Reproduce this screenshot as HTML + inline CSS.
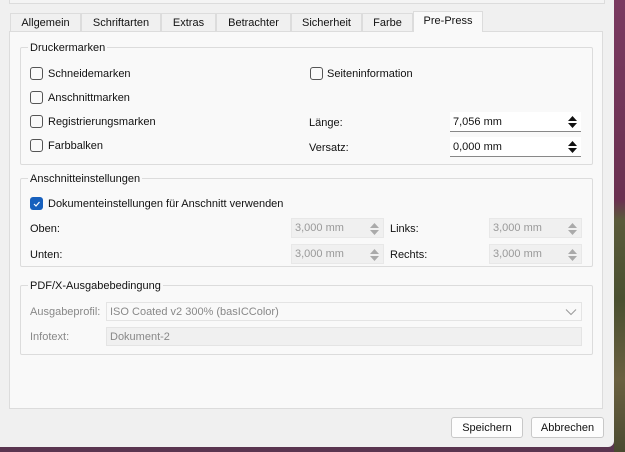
<!DOCTYPE html>
<html><head><meta charset="utf-8"><style>
*{box-sizing:border-box;margin:0;padding:0}
body{width:625px;height:452px;overflow:hidden;background:#5a3550;font-family:"Liberation Sans",sans-serif;font-size:11px;color:#111;position:relative}
.abs{position:absolute}
.win{left:0;top:0;width:614px;height:447px;background:#f0f0f0;border-bottom-right-radius:6px}
.photo{left:614px;top:0;width:11px;height:452px;background:linear-gradient(#7a3a60 0,#6a3050 200px,#5a5a3a 220px,#4a5030 300px,#6a6040 380px,#4a4a30 452px)}
.tab{top:13px;height:19px;border:1px solid #dcdcdc;border-bottom:none;background:#f0f0f0;text-align:center;line-height:19px}
.tab.sel{top:11px;height:21px;background:#f9f9f9;z-index:2;line-height:19px}
.page{left:9px;top:31px;width:594px;height:378px;background:#f9f9f9;border:1px solid #dcdcdc}
.grp{border:1px solid #dcdcdc;border-radius:2px}
.gt{background:#f9f9f9;padding:0 2px;line-height:13px}
.cb{width:13px;height:13px;border:1px solid #555;border-radius:3px;background:#f9f9f9}
.t{margin-top:2px}
.spin{height:20px;background:#fff;border-bottom:1px solid #888;padding-left:3px;line-height:21px}
.spin.dis{background:#f0f0f0;border:1px solid #e8e8e8;color:#999;line-height:19px}
.arr{position:absolute;right:3px;top:3px;width:11px;height:14px}
.gray{color:#888}
.btn{top:417px;height:21px;border:1px solid #c8c8c8;border-radius:3px;background:#fdfdfd;text-align:center;line-height:20px}
</style></head><body>
<div class="abs win"></div>
<div class="abs photo"></div>
<div class="abs" style="left:9px;top:0;width:596px;height:4px;border:1px solid #dcdcdc;border-top:none;background:#f4f4f4"></div>

<div class="abs tab" style="left:10px;width:71px">Allgemein</div>
<div class="abs tab" style="left:81px;width:80px">Schriftarten</div>
<div class="abs tab" style="left:161px;width:55px">Extras</div>
<div class="abs tab" style="left:216px;width:75px">Betrachter</div>
<div class="abs tab" style="left:291px;width:71px">Sicherheit</div>
<div class="abs tab" style="left:362px;width:51px">Farbe</div>
<div class="abs tab sel" style="left:413px;width:70px">Pre-Press</div>
<div class="abs page"></div>

<div class="abs grp" style="left:20px;top:47px;width:573px;height:118px"></div>
<div class="abs gt" style="left:28px;top:42px">Druckermarken</div>
<div class="abs cb" style="left:30px;top:67px"></div><div class="abs t" style="left:48px;top:66px">Schneidemarken</div>
<div class="abs cb" style="left:30px;top:91px"></div><div class="abs t" style="left:48px;top:90px">Anschnittmarken</div>
<div class="abs cb" style="left:30px;top:115px"></div><div class="abs t" style="left:48px;top:114px">Registrierungsmarken</div>
<div class="abs cb" style="left:30px;top:139px"></div><div class="abs t" style="left:48px;top:138px">Farbbalken</div>
<div class="abs cb" style="left:310px;top:67px"></div><div class="abs t" style="left:327px;top:66px">Seiteninformation</div>
<div class="abs t" style="left:309px;top:115px">Länge:</div>
<div class="abs t" style="left:309px;top:140px">Versatz:</div>
<div class="abs spin" style="left:450px;top:112px;width:131px">7,056 mm<svg class="arr" viewBox="0 0 11 14"><path d="M1 6L5.5 1L10 6Z M1 8L5.5 13L10 8Z" fill="#111"/></svg></div>
<div class="abs spin" style="left:450px;top:137px;width:131px">0,000 mm<svg class="arr" viewBox="0 0 11 14"><path d="M1 6L5.5 1L10 6Z M1 8L5.5 13L10 8Z" fill="#111"/></svg></div>

<div class="abs grp" style="left:20px;top:178px;width:573px;height:89px"></div>
<div class="abs gt" style="left:28px;top:173px">Anschnitteinstellungen</div>
<div class="abs" style="left:30px;top:197px;width:13px;height:13px;background:#1760bd;border-radius:3px"><svg width="13" height="13" viewBox="0 0 13 13" style="position:absolute;left:0;top:0"><path d="M4 7L6 9L9.5 5" stroke="#fff" stroke-width="1.2" fill="none"/></svg></div>
<div class="abs t" style="left:48px;top:196px">Dokumenteinstellungen für Anschnitt verwenden</div>
<div class="abs t" style="left:30px;top:221px">Oben:</div>
<div class="abs t" style="left:30px;top:247px">Unten:</div>
<div class="abs t" style="left:390px;top:221px">Links:</div>
<div class="abs t" style="left:390px;top:247px">Rechts:</div>
<div class="abs spin dis" style="left:291px;top:218px;width:93px">3,000 mm<svg class="arr" viewBox="0 0 11 14"><path d="M1 6L5.5 1L10 6Z M1 8L5.5 13L10 8Z" fill="#aaa"/></svg></div>
<div class="abs spin dis" style="left:291px;top:244px;width:93px">3,000 mm<svg class="arr" viewBox="0 0 11 14"><path d="M1 6L5.5 1L10 6Z M1 8L5.5 13L10 8Z" fill="#aaa"/></svg></div>
<div class="abs spin dis" style="left:489px;top:218px;width:93px">3,000 mm<svg class="arr" viewBox="0 0 11 14"><path d="M1 6L5.5 1L10 6Z M1 8L5.5 13L10 8Z" fill="#aaa"/></svg></div>
<div class="abs spin dis" style="left:489px;top:244px;width:93px">3,000 mm<svg class="arr" viewBox="0 0 11 14"><path d="M1 6L5.5 1L10 6Z M1 8L5.5 13L10 8Z" fill="#aaa"/></svg></div>

<div class="abs grp" style="left:20px;top:285px;width:573px;height:70px"></div>
<div class="abs gt" style="left:28px;top:280px">PDF/X-Ausgabebedingung</div>
<div class="abs gray t" style="left:30px;top:304px">Ausgabeprofil:</div>
<div class="abs gray t" style="left:30px;top:329px">Infotext:</div>
<div class="abs gray" style="left:106px;top:302px;width:476px;height:19px;border:1px solid #e4e4e4;background:#f9f9f9;padding-left:3px;line-height:19px">ISO Coated v2 300% (basICColor)<svg style="position:absolute;right:4px;top:5px" width="12" height="8" viewBox="0 0 12 8"><path d="M1 1.5L6 6.5L11 1.5" stroke="#999" fill="none"/></svg></div>
<div class="abs gray" style="left:106px;top:327px;width:476px;height:19px;border:1px solid #e4e4e4;background:#f0f0f0;padding-left:3px;line-height:19px">Dokument-2</div>

<div class="abs btn" style="left:451px;width:72px">Speichern</div>
<div class="abs btn" style="left:531px;width:73px">Abbrechen</div>
</body></html>
